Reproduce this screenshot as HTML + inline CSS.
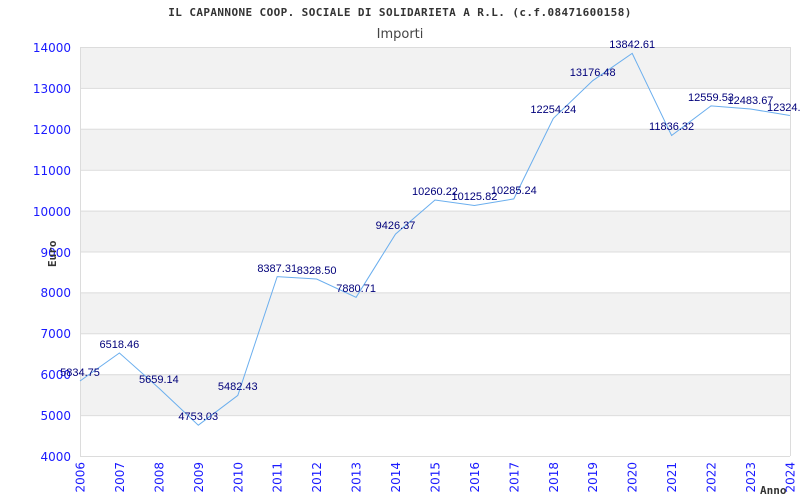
<!DOCTYPE html>
<html><head><meta charset="utf-8"><style>html,body{margin:0;padding:0;background:#fff;width:800px;height:500px;overflow:hidden}</style></head>
<body>
<svg width="800" height="500" xmlns="http://www.w3.org/2000/svg" font-family="DejaVu Sans, Liberation Sans, sans-serif">
<rect width="800" height="500" fill="#fff"/>
<g fill="#f2f2f2">
<rect x="80" y="47" width="710" height="40.9"/>
<rect x="80" y="128.8" width="710" height="40.9"/>
<rect x="80" y="210.6" width="710" height="40.9"/>
<rect x="80" y="292.4" width="710" height="40.9"/>
<rect x="80" y="374.2" width="710" height="40.9"/>
</g>
<g stroke="#dcdcdc" stroke-width="1">
<line x1="80" y1="47.5" x2="790" y2="47.5"/><line x1="80" y1="88.4" x2="790" y2="88.4"/><line x1="80" y1="129.3" x2="790" y2="129.3"/><line x1="80" y1="170.2" x2="790" y2="170.2"/><line x1="80" y1="211.1" x2="790" y2="211.1"/><line x1="80" y1="252" x2="790" y2="252"/><line x1="80" y1="292.9" x2="790" y2="292.9"/><line x1="80" y1="333.8" x2="790" y2="333.8"/><line x1="80" y1="374.7" x2="790" y2="374.7"/><line x1="80" y1="415.6" x2="790" y2="415.6"/><line x1="80" y1="456.5" x2="790" y2="456.5"/>
<line x1="80.5" y1="47" x2="80.5" y2="456"/><line x1="790.5" y1="47" x2="790.5" y2="456"/>
</g>
<text x="400" y="16" text-anchor="middle" font-family="DejaVu Sans Mono, Liberation Mono, monospace" font-size="11" font-weight="bold" fill="#333" letter-spacing="0.4">IL CAPANNONE COOP. SOCIALE DI SOLIDARIETA A R.L. (c.f.08471600158)</text>
<text x="400" y="38" text-anchor="middle" font-size="13" fill="#444">Importi</text>
<g fill="#1a1aff" font-size="12" text-anchor="end">
<text x="71" y="52">14000</text><text x="71" y="93">13000</text><text x="71" y="134">12000</text><text x="71" y="175">11000</text><text x="71" y="216">10000</text><text x="71" y="257">9000</text><text x="71" y="297">8000</text><text x="71" y="338">7000</text><text x="71" y="379">6000</text><text x="71" y="420">5000</text><text x="71" y="461">4000</text>
</g>
<g fill="#1a1aff" font-size="12" text-anchor="end">
<text transform="translate(84.5,462) rotate(-90)">2006</text>
<text transform="translate(123.9,462) rotate(-90)">2007</text>
<text transform="translate(163.4,462) rotate(-90)">2008</text>
<text transform="translate(202.8,462) rotate(-90)">2009</text>
<text transform="translate(242.3,462) rotate(-90)">2010</text>
<text transform="translate(281.7,462) rotate(-90)">2011</text>
<text transform="translate(321.1,462) rotate(-90)">2012</text>
<text transform="translate(360.6,462) rotate(-90)">2013</text>
<text transform="translate(400,462) rotate(-90)">2014</text>
<text transform="translate(439.5,462) rotate(-90)">2015</text>
<text transform="translate(478.9,462) rotate(-90)">2016</text>
<text transform="translate(518.3,462) rotate(-90)">2017</text>
<text transform="translate(557.8,462) rotate(-90)">2018</text>
<text transform="translate(597.2,462) rotate(-90)">2019</text>
<text transform="translate(636.7,462) rotate(-90)">2020</text>
<text transform="translate(676.1,462) rotate(-90)">2021</text>
<text transform="translate(715.5,462) rotate(-90)">2022</text>
<text transform="translate(755,462) rotate(-90)">2023</text>
<text transform="translate(794.4,462) rotate(-90)">2024</text>
</g>
<text transform="translate(56,267) rotate(-90)" font-family="DejaVu Sans Mono, monospace" font-size="11" font-weight="bold" fill="#333">Euro</text>
<text x="760" y="494" font-family="DejaVu Sans Mono, monospace" font-size="11" font-weight="bold" fill="#333">Anno</text>
<polyline fill="none" stroke="#6aaeee" stroke-width="1" points="80,381 119.4,353 158.9,388.1 198.3,425.2 237.8,395.4 277.2,276.6 316.6,279 356.1,297.3 395.5,234.1 435,200 474.4,205.5 513.8,198.9 553.3,118.4 592.7,80.7 632.2,53.4 671.6,135.5 711,105.9 750.5,109 789.9,115.5"/>
<g fill="#00007a" font-size="11" text-anchor="middle" font-family="Liberation Sans, sans-serif">
<text x="80" y="376">5834.75</text><text x="119.4" y="348">6518.46</text><text x="158.9" y="383">5659.14</text><text x="198.3" y="420">4753.03</text><text x="237.8" y="390">5482.43</text><text x="277.2" y="272">8387.31</text><text x="316.6" y="274">8328.50</text><text x="356.1" y="292">7880.71</text><text x="395.5" y="229">9426.37</text><text x="435" y="195">10260.22</text><text x="474.4" y="200">10125.82</text><text x="513.8" y="194">10285.24</text><text x="553.3" y="113">12254.24</text><text x="592.7" y="76">13176.48</text><text x="632.2" y="48">13842.61</text><text x="671.6" y="130">11836.32</text><text x="711" y="101">12559.53</text><text x="750.5" y="104">12483.67</text><text x="789.9" y="111">12324.50</text>
</g>
</svg>
</body></html>
